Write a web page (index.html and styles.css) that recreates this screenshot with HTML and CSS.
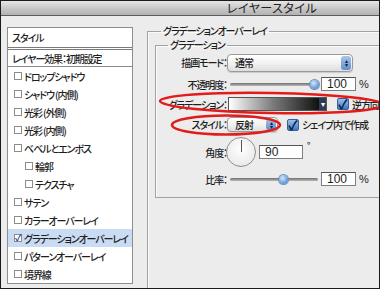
FILE: index.html
```html
<!DOCTYPE html>
<html lang="ja">
<head>
  <meta charset="UTF-8">
  <title>レイヤースタイル</title>
  <link rel="stylesheet" href="styles.css">
</head>
<body>
  <div class="window">
    <!-- Title Bar -->
    <div class="titlebar">レイヤースタイル</div>

    <div class="content">
      <!-- Style List -->
      <ul class="style-list">
        <li class="list-head">スタイル</li>
        <li class="list-default">レイヤー効果：初期設定</li>
        <li><span class="box"></span>ドロップシャドウ</li>
        <li><span class="box"></span>シャドウ (内側)</li>
        <li><span class="box"></span>光彩 (外側)</li>
        <li><span class="box"></span>光彩 (内側)</li>
        <li><span class="box"></span>ベベルとエンボス</li>
        <li class="sub"><span class="box"></span>輪郭</li>
        <li class="sub"><span class="box"></span>テクスチャ</li>
        <li><span class="box"></span>サテン</li>
        <li><span class="box"></span>カラーオーバーレイ</li>
        <li class="selected"><span class="box checked">✓</span>グラデーションオーバーレイ</li>
        <li><span class="box"></span>パターンオーバーレイ</li>
        <li><span class="box"></span>境界線</li>
      </ul>

      <!-- Settings -->
      <fieldset class="group outer">
        <legend>グラデーションオーバーレイ</legend>
        <fieldset class="group inner">
          <legend>グラデーション</legend>

          <div class="row row-mode">
            <label>描画モード：</label>
            <div class="select select-wide">通常<span class="arrows"><i>▴</i><i>▾</i></span></div>
          </div>

          <div class="row row-opacity">
            <label>不透明度：</label>
            <div class="slider"><span class="knob" style="left: 84px"></span></div>
            <div class="field field-num">100</div>
            <span class="unit">%</span>
          </div>

          <div class="row row-gradient">
            <label>グラデーション：</label>
            <div class="gradient"><span class="drop">▾</span></div>
            <span class="check">✓</span>
            <span class="check-label">逆方向</span>
          </div>

          <div class="row row-style">
            <label>スタイル：</label>
            <div class="select select-small">反射<span class="arrows"><i>▴</i><i>▾</i></span></div>
            <span class="check">✓</span>
            <span class="check-label">シェイプ内で作成</span>
          </div>

          <div class="row row-angle">
            <label>角度：</label>
            <div class="dial"><span class="hand"></span></div>
            <div class="field field-angle">90</div>
            <span class="degree">°</span>
          </div>

          <div class="row row-scale">
            <label>比率：</label>
            <div class="slider"><span class="knob" style="left: 53px"></span></div>
            <div class="field field-num">100</div>
            <span class="unit">%</span>
          </div>
        </fieldset>
      </fieldset>
    </div>

    <!-- Red marks drawn over the dialog -->
    <svg class="marks" width="380" height="289" viewBox="0 0 380 289">
      <ellipse cx="272" cy="103" rx="112" ry="10" transform="rotate(1 272 103)" />
      <ellipse cx="226" cy="125" rx="54" ry="9.5" />
    </svg>
  </div>
</body>
</html>
```

FILE: styles.css
```css
/* General Styling */
body {
  margin: 0;
  font-family: "Noto Sans CJK JP", "Noto Sans", sans-serif;
  font-size: 10px;
  font-weight: 500;
  letter-spacing: -1.1px;
  font-feature-settings: "palt";
  color: #1e1e1e;
  background-color: #ececec;
}

.window {
  position: relative;
  width: 380px;
  height: 289px;
  box-sizing: border-box;
  border: 1px solid #1a1a1a;
  background-color: #ececec;
  overflow: hidden;
}

/* Title Bar */
.titlebar {
  height: 14px;
  line-height: 14px;
  padding-left: 164px;
  text-align: center;
  font-size: 12px;
  font-weight: normal;
  letter-spacing: 0.5px;
  color: #222;
  background: linear-gradient(#e6e6e6, #c4c4c4 60%, #b2b2b2);
  border-bottom: 1px solid #5c5c5c;
}

.content {
  display: flex;
  align-items: flex-start;
  padding-top: 8px;
}

/* Style List */
.style-list {
  list-style: none;
  margin: 3px 0 0 6px;
  padding: 0;
  width: 124px;
  flex-shrink: 0;
  background-color: #ffffff;
  border: 1px solid #8d8d8d;
  overflow: hidden;
}

.style-list li {
  display: flex;
  align-items: center;
  height: 18px;
  padding-left: 6px;
  white-space: nowrap;
}

.style-list .list-head {
  height: 19px;
  padding-left: 4px;
  border-bottom: 3px double #7a7a7a;
}

.style-list .list-default {
  height: 16px;
  padding-left: 4px;
  border-bottom: 1px solid #8a8a8a;
}

.style-list .sub {
  padding-left: 17px;
}

.style-list .selected {
  background-color: #cadcf3;
}

.box {
  width: 6px;
  height: 6px;
  margin-right: 2px;
  border: 1px solid #8c8c8c;
  background-color: #fff;
  font-size: 9px;
  line-height: 6px;
  letter-spacing: 0;
  text-align: center;
  overflow: visible;
}

.box.checked {
  color: #1c3d8c;
  font-weight: bold;
}

/* Groups */
.group {
  margin: 0;
  border: 1px solid #a2a2a2;
  box-shadow: inset 1px 1px 0 #fafafa;
}

.group legend {
  padding: 0 2px;
  line-height: 14px;
  white-space: nowrap;
}

.outer {
  flex: 1;
  height: 300px;
  margin-left: 14px;
  padding: 0 1px 0 7px;
  border-right-color: #8a8a8a;
}

.outer legend {
  margin-left: 6px;
}

.inner {
  padding: 0 0 11px 0;
  border-right: none;
}

.inner legend {
  margin-left: 12px;
}

/* Form Rows */
.row {
  display: flex;
  align-items: center;
  white-space: nowrap;
}

.row label {
  width: 71px;
  flex-shrink: 0;
  text-align: right;
}

.row-mode {
  height: 19px;
  margin-top: 1px;
}

.row-opacity {
  height: 14px;
  margin-top: 5px;
}

.row-gradient {
  height: 14px;
  margin-top: 6px;
}

.row-style {
  height: 15px;
  margin-top: 6px;
}

.row-angle {
  height: 30px;
  margin-top: 5px;
}

.row-scale {
  height: 14px;
  margin-top: 5px;
}

/* Selects */
.select {
  position: relative;
  box-sizing: border-box;
  padding-left: 7px;
  border: 1px solid #9a9a9a;
  border-radius: 4px;
  background: linear-gradient(#ffffff, #f2f2f2 50%, #dedede);
  box-shadow: 0 1px 1px rgba(0, 0, 0, 0.15);
}

.select-wide {
  width: 126px;
  height: 18px;
  line-height: 16px;
}

.select-small {
  width: 51px;
  height: 15px;
  line-height: 13px;
}

.arrows {
  position: absolute;
  top: 1px;
  right: 1px;
  bottom: 1px;
  width: 10px;
  display: flex;
  flex-direction: column;
  justify-content: center;
  align-items: center;
  border-radius: 3px;
  background: linear-gradient(#a9c6e8, #5f8fca);
}

.arrows i {
  font-style: normal;
  font-size: 6px;
  line-height: 4px;
  letter-spacing: 0;
  color: #10233f;
}

/* Sliders */
.slider {
  position: relative;
  width: 88px;
  height: 3px;
  margin-left: 3px;
  border-radius: 2px;
  background: linear-gradient(#707070, #b8b8b8);
}

.knob {
  position: absolute;
  top: -3px;
  width: 9px;
  height: 9px;
  margin-left: -4px;
  border-radius: 50%;
  background: radial-gradient(circle at 40% 35%, #d8e8fb, #5e94d4 70%);
  box-shadow: 0 0 0 1px #6f8fb8;
}

.field {
  box-sizing: border-box;
  height: 14px;
  line-height: 13px;
  padding-left: 5px;
  border: 1px solid #7d7d7d;
  border-top-color: #555;
  background-color: #fff;
  font-family: "Liberation Sans", Arial, sans-serif;
  font-size: 12px;
  font-weight: normal;
  letter-spacing: 0;
}

.field-num {
  width: 35px;
  margin-left: 3px;
}

.field-angle {
  width: 44px;
  margin-left: 3px;
}

.unit {
  margin-left: 3px;
  font-family: "Liberation Sans", Arial, sans-serif;
  font-size: 11px;
  letter-spacing: 0;
}

.degree {
  align-self: flex-start;
  margin: 2px 0 0 4px;
  font-size: 9px;
}

/* Gradient Bar */
.gradient {
  position: relative;
  width: 99px;
  height: 14px;
  box-sizing: border-box;
  margin-left: 1px;
  border: 1px solid #555;
  background: linear-gradient(to right, #ffffff, #7c7c7c 45%, #000000);
}

.drop {
  position: absolute;
  right: 0;
  top: 0;
  bottom: 0;
  width: 7px;
  font-size: 8px;
  line-height: 12px;
  letter-spacing: 0;
  text-align: center;
  color: #fff;
  background-color: #2b3a55;
}

/* Checkboxes */
.check {
  box-sizing: border-box;
  width: 12px;
  height: 12px;
  border: 1px solid #3a5f94;
  border-radius: 2px;
  background: linear-gradient(#9cc0ec, #3f78c8);
  color: #0a1a3a;
  font-size: 13px;
  font-weight: bold;
  line-height: 10px;
  letter-spacing: 0;
  text-align: center;
}

.row-gradient .check {
  margin-left: 10px;
}

.row-style .check {
  margin-left: 9px;
}

.check-label {
  margin-left: 3px;
}

/* Angle Dial */
.dial {
  position: relative;
  box-sizing: border-box;
  width: 30px;
  height: 30px;
  margin-left: -1px;
  border: 1px solid #8f8f8f;
  border-radius: 50%;
  background: radial-gradient(circle at 50% 40%, #ffffff, #ececec 70%, #d4d4d4);
}

.hand {
  position: absolute;
  left: 14px;
  top: 2px;
  width: 1px;
  height: 12px;
  background-color: #555;
}

/* Red marks */
.marks {
  position: absolute;
  left: -1px;
  top: -1px;
  pointer-events: none;
}

.marks ellipse {
  fill: none;
  stroke: #e21b1b;
  stroke-width: 2.5;
}
```
